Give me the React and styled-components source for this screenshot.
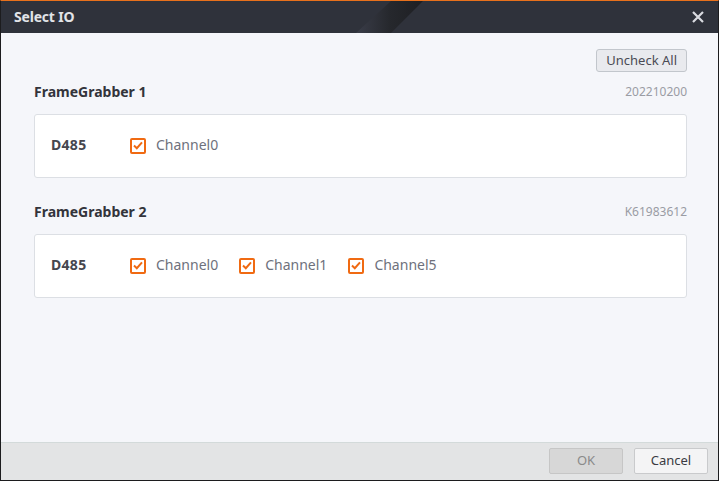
import React from "react";
import styled, { createGlobalStyle } from "styled-components";

const Global = createGlobalStyle`
  html, body { margin: 0; padding: 0; background: #ffffff; }
  * { box-sizing: border-box; }
`;

const Window = styled.div`
  width: 719px;
  height: 481px;
  display: flex;
  flex-direction: column;
  border: 1px solid #1c1c1e;
  border-top: 1px solid #e8711c;
  font-family: "Noto Sans", "Open Sans", sans-serif;
  background: #f5f6fa;
  overflow: hidden;
`;

const TitleBar = styled.div`
  position: relative;
  height: 32px;
  flex: none;
  display: flex;
  align-items: center;
  justify-content: space-between;
  padding: 0 12px 1px 13px;
  background: #2f323b;
  overflow: hidden;
`;

const Stripe = styled.svg`
  position: absolute;
  left: 352px;
  top: 0;
  pointer-events: none;
`;

const Title = styled.span`
  position: relative;
  color: #e2e4e8;
  font-size: 14px;
  font-weight: 700;
  letter-spacing: -0.2px;
`;

const CloseBtn = styled.button`
  position: relative;
  border: 0;
  background: transparent;
  padding: 0;
  width: 16px;
  height: 16px;
  display: flex;
  align-items: center;
  justify-content: center;
  cursor: pointer;
`;

const Body = styled.div`
  flex: 1;
  display: flex;
  flex-direction: column;
  padding: 16px 31px 0 33px;
`;

const TopActions = styled.div`
  display: flex;
  justify-content: flex-end;
  margin-bottom: 11px;
`;

const GhostButton = styled.button`
  height: 23px;
  padding: 0 9px 1px;
  border: 1px solid #c2c6cc;
  border-radius: 3px;
  background: #e9eaee;
  color: #4a4b55;
  font-family: inherit;
  font-size: 13px;
  line-height: 1;
  cursor: pointer;
`;

const GroupHeader = styled.div`
  height: 20px;
  display: flex;
  align-items: center;
  justify-content: space-between;
  padding-bottom: 3px;
  margin-bottom: 11px;
`;

const GroupName = styled.span`
  font-size: 14px;
  font-weight: 700;
  color: #33343b;
`;

const Serial = styled.span`
  font-size: 12px;
  color: #9a9ca4;
`;

const Card = styled.div`
  height: 64px;
  background: #ffffff;
  border: 1px solid #dcdfe4;
  border-radius: 3px;
  display: flex;
  align-items: center;
  padding: 0 16px 3px;
  margin-bottom: ${(p) => p.$mb || 0}px;
`;

const DeviceName = styled.span`
  width: 79px;
  flex: none;
  font-size: 14px;
  font-weight: 700;
  color: #45464e;
  letter-spacing: 0.3px;
`;

const Option = styled.label`
  display: flex;
  align-items: center;
  gap: 10px;
  margin-right: 21px;
  cursor: pointer;
`;

const Box = styled.span`
  width: 16px;
  height: 16px;
  margin-top: 2px;
  border: 2px solid #f06a12;
  border-radius: 2px;
  background: #fff;
  display: flex;
  align-items: center;
  justify-content: center;
`;

const OptionText = styled.span`
  font-size: 14px;
  color: #6e717c;
`;

const Footer = styled.div`
  height: 38px;
  flex: none;
  border-top: 1px solid #d3dada;
  background: #e3e4e5;
  display: flex;
  align-items: center;
  justify-content: flex-end;
  gap: 11px;
  padding: 0 10px 2px 0;
`;

const FooterButton = styled.button`
  width: 74px;
  height: 26px;
  border-radius: 2px;
  font-family: inherit;
  font-size: 13px;
  padding: 0 0 1px;
  border: 1px solid ${(p) => (p.$disabled ? "#c6c6c6" : "#c9cacc")};
  background: ${(p) => (p.$disabled ? "#d7d7d7" : "#f4f4f5")};
  color: ${(p) => (p.$disabled ? "#8a8a8a" : "#3a3b42")};
`;

function Check({ label }) {
  return (
    <Option>
      <Box>
        <svg width="10" height="9" viewBox="0 0 10 9">
          <path d="M1 4.6 L3.8 7.2 L9 1.4" fill="none" stroke="#f06a12" strokeWidth="2" />
        </svg>
      </Box>
      <OptionText>{label}</OptionText>
    </Option>
  );
}

const groups = [
  { name: "FrameGrabber 1", serial: "202210200", device: "D485", channels: ["Channel0"] },
  { name: "FrameGrabber 2", serial: "K61983612", device: "D485", channels: ["Channel0", "Channel1", "Channel5"] },
];

export default function App() {
  return (
    <>
      <Global />
      <Window>
        <TitleBar>
          <Stripe width="72" height="32" viewBox="0 0 72 32">
            <defs>
              <linearGradient id="sg" x1="0" y1="0" x2="1" y2="0">
                <stop offset="0" stopColor="#3a3d49" />
                <stop offset="0.5" stopColor="#26282d" />
                <stop offset="1" stopColor="#1e1f23" />
              </linearGradient>
            </defs>
            <polygon points="38,0 70,0 38,32 3,32" fill="url(#sg)" />
          </Stripe>
          <Title>Select IO</Title>
          <CloseBtn aria-label="Close">
            <svg width="12" height="12" viewBox="0 0 12 12">
              <path d="M1 1 L11 11 M11 1 L1 11" stroke="#d9dbe0" strokeWidth="2.2" />
            </svg>
          </CloseBtn>
        </TitleBar>
        <Body>
          <TopActions>
            <GhostButton>Uncheck All</GhostButton>
          </TopActions>
          {groups.map((g, i) => (
            <React.Fragment key={g.name}>
              <GroupHeader>
                <GroupName>{g.name}</GroupName>
                <Serial>{g.serial}</Serial>
              </GroupHeader>
              <Card $mb={i === 0 ? 25 : 0}>
                <DeviceName>{g.device}</DeviceName>
                {g.channels.map((c) => (
                  <Check key={c} label={c} />
                ))}
              </Card>
            </React.Fragment>
          ))}
        </Body>
        <Footer>
          <FooterButton $disabled>OK</FooterButton>
          <FooterButton>Cancel</FooterButton>
        </Footer>
      </Window>
    </>
  );
}
